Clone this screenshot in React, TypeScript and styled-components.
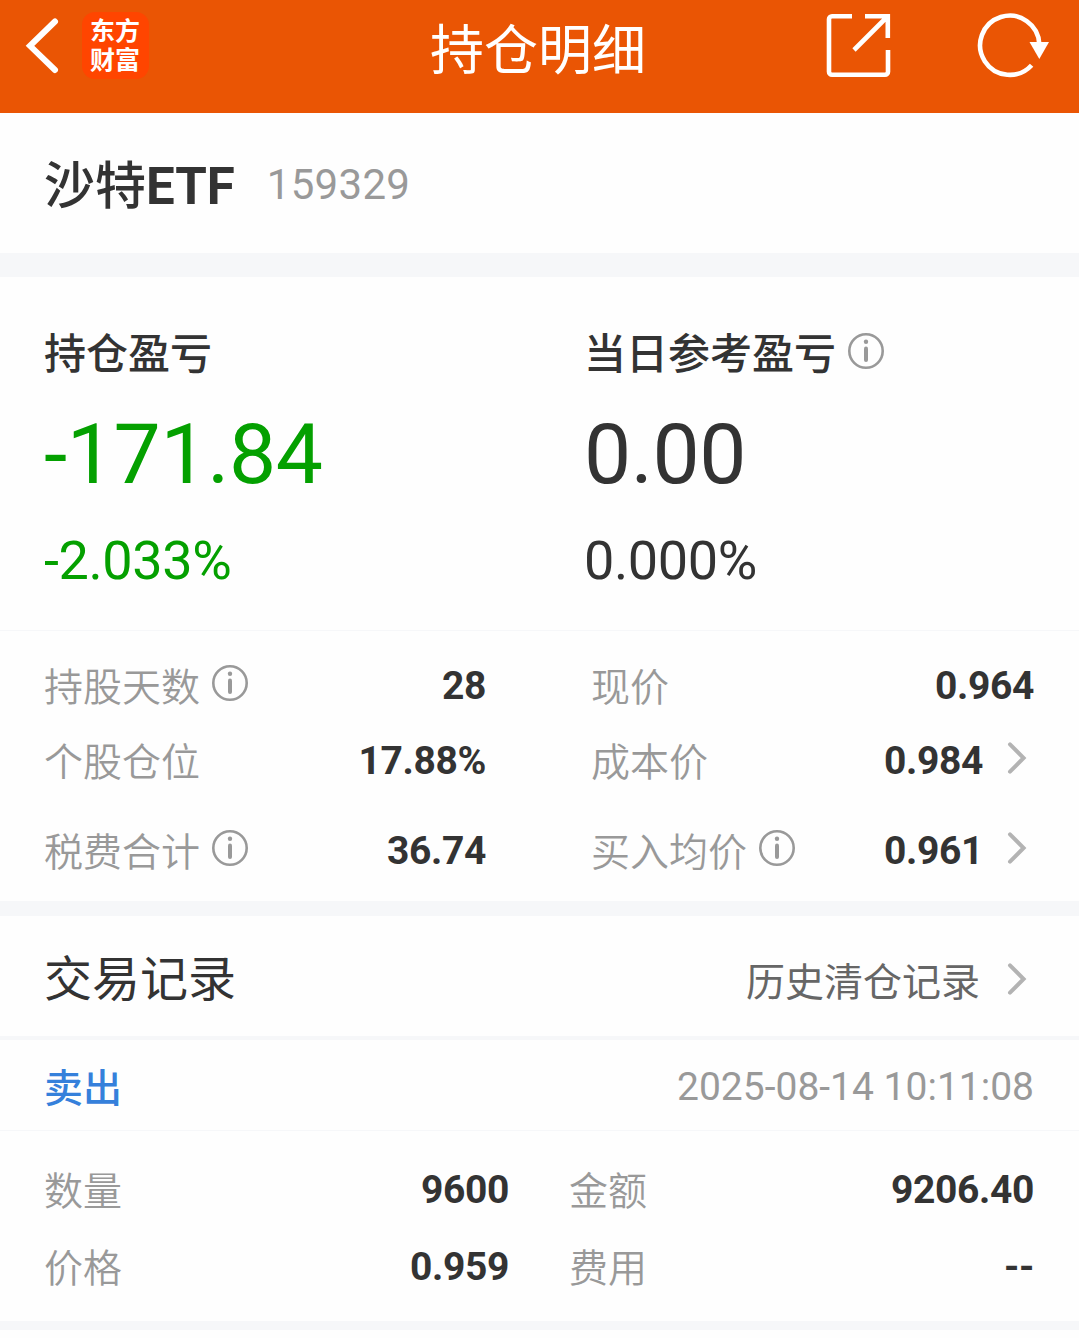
import React from "react";
import styled, { createGlobalStyle } from "styled-components";

const GlobalStyle = createGlobalStyle`
  * { box-sizing: border-box; }
  body {
    margin: 0;
    background: #fefefe;
    color: #333;
    font-family: Roboto, "Noto Sans CJK SC", sans-serif;
  }
`;

const Page = styled.main`
  display: flex;
  flex-direction: column;
  width: 1079px;
`;

const Header = styled.header`
  display: grid;
  grid-template-columns: 1fr auto 1fr;
  align-items: start;
  height: 113px;
  padding: 12px 28px 0 25px;
  background: #ea5504;
  color: #fff;
`;

const HeaderLeft = styled.div`
  display: flex;
  align-items: center;
  gap: 22px;
`;

const HeaderTitle = styled.h1`
  margin: 0;
  padding-top: 4px;
  font-size: 54px;
  font-weight: 400;
  line-height: 72px;
`;

const HeaderRight = styled.div`
  display: flex;
  justify-content: flex-end;
  gap: 86px;
`;

const Logo = styled.div`
  width: 67px;
  height: 67px;
  padding: 5px 0 0 8px;
  border-radius: 13px;
  background: #ff4500;
  font-size: 25px;
  font-weight: 700;
  line-height: 29px;
`;

const Band = styled.div<{ $height: number }>`
  height: ${(p) => p.$height}px;
  background: #f6f7f9;
`;

const StockBar = styled.section`
  display: flex;
  align-items: flex-start;
  gap: 32px;
  height: 140px;
  padding: 38px 44px 0;
`;

const StockName = styled.h2`
  margin: 0;
  font-size: 51px;
  font-weight: 500;
  line-height: 72px;

  b {
    font-weight: 700;
  }
`;

const StockCode = styled.span`
  color: #999;
  font-size: 42px;
  letter-spacing: 0.3px;
  line-height: 68px;
`;

const Profit = styled.section`
  display: grid;
  grid-template-columns: 540px 1fr;
  height: 353px;
  padding: 48px 45px 0 44px;
`;

const ProfitCol = styled.div<{ $tone?: string }>`
  display: flex;
  flex-direction: column;
  color: ${(p) => p.$tone ?? "#333"};
`;

const ProfitLabel = styled.div`
  display: flex;
  align-items: center;
  gap: 12px;
  height: 60px;
  color: #333;
  font-size: 42px;
  font-weight: 500;
  line-height: 60px;
`;

const ProfitAmount = styled.div`
  margin-top: 20px;
  font-size: 84px;
  letter-spacing: -0.4px;
  line-height: 100px;
`;

const ProfitRate = styled.div`
  margin-top: 23px;
  font-size: 54px;
  letter-spacing: -0.4px;
  line-height: 66px;
`;

const Details = styled.section`
  display: grid;
  grid-template-columns: 442px 443px;
  column-gap: 105px;
  grid-template-rows: 75px 75px 105px;
  height: 270px;
  padding: 17px 45px 0 44px;
`;

const Trade = styled.section`
  display: grid;
  grid-template-columns: 465px 465px;
  column-gap: 60px;
  grid-template-rows: 77px 77px;
  height: 190px;
  padding: 20px 45px 0 44px;
`;

const Cell = styled.div`
  display: flex;
  align-items: center;
`;

const Label = styled.span`
  padding-top: 4px;
  color: #999;
  font-size: 39px;
  font-weight: 350;
  line-height: 56px;
`;

const Value = styled.span`
  margin-left: auto;
  font-size: 39px;
  font-weight: 700;
  letter-spacing: -0.35px;
  line-height: 56px;
`;

const InfoSvg = styled.svg`
  flex: none;
  width: 36px;
  height: 36px;
  margin: 0 0 5px 12px;

  ${ProfitLabel} & {
    margin: 0 0 8px;
  }
`;

const ArrowSvg = styled.svg`
  flex: none;
  width: 20px;
  height: 34px;
  margin: 0 7px 5px 24px;
`;

const RecordHeader = styled.section`
  display: flex;
  align-items: center;
  justify-content: space-between;
  height: 120px;
  padding: 4px 45px 0 44px;
`;

const RecordTitle = styled.h2`
  margin: 0;
  padding-top: 4px;
  font-size: 48px;
  font-weight: 400;
  line-height: 70px;
`;

const HistoryLink = styled.div`
  display: flex;
  align-items: center;
  gap: 3px;
  padding-top: 6px;
  color: #666;
`;

const HistoryText = styled.span`
  padding-top: 4px;
  font-size: 39px;
  line-height: 56px;
`;

const SellRow = styled.section`
  display: flex;
  align-items: center;
  justify-content: space-between;
  height: 90px;
  padding: 4px 45px 0 44px;
  font-size: 39px;
  line-height: 56px;
`;

const Side = styled.span`
  padding-top: 4px;
  color: #3580db;
  font-weight: 500;
`;

const Time = styled.time`
  color: #999;
`;

const InfoIcon = () => (
  <InfoSvg viewBox="0 0 36 36" fill="none">
    <circle cx="18" cy="18" r="16.7" stroke="#999" strokeWidth="2.6" />
    <circle cx="18" cy="8.8" r="2.2" fill="#999" />
    <path d="M18 15.6V27" stroke="#999" strokeWidth="4" strokeLinecap="round" />
  </InfoSvg>
);

const Arrow = () => (
  <ArrowSvg viewBox="0 0 20 34" fill="none">
    <path d="M3 3.3L16.6 17L3 30.7" stroke="#b3b3b3" strokeWidth="4" strokeLinecap="round" />
  </ArrowSvg>
);

type Item = { label: string; value: string; info?: boolean; arrow?: boolean };

const DETAILS: Item[] = [
  { label: "持股天数", value: "28", info: true },
  { label: "现价", value: "0.964" },
  { label: "个股仓位", value: "17.88%" },
  { label: "成本价", value: "0.984", arrow: true },
  { label: "税费合计", value: "36.74", info: true },
  { label: "买入均价", value: "0.961", info: true, arrow: true },
];

const TRADE: Item[] = [
  { label: "数量", value: "9600" },
  { label: "金额", value: "9206.40" },
  { label: "价格", value: "0.959" },
  { label: "费用", value: "--" },
];

const ItemCell = ({ label, value, info, arrow }: Item) => (
  <Cell>
    <Label>{label}</Label>
    {info && <InfoIcon />}
    <Value>{value}</Value>
    {arrow && <Arrow />}
  </Cell>
);

export default function App() {
  return (
    <Page>
      <GlobalStyle />
      <Header>
        <HeaderLeft>
          <svg width="35" height="60" viewBox="0 0 35 60" fill="none">
            <path d="M30 5.5L5 29.8L30 54" stroke="#fff" strokeWidth="6" strokeLinecap="round" />
          </svg>
          <Logo>
            东方
            <br />
            财富
          </Logo>
        </HeaderLeft>
        <HeaderTitle>持仓明细</HeaderTitle>
        <HeaderRight>
          <svg width="67" height="67" viewBox="0 0 67 67" fill="none" stroke="#fff" strokeWidth="4.6">
            <path d="M28 4.3H8A3 3 0 0 0 5 7.3V59.7A3 3 0 0 0 8 62.7H61A3 3 0 0 0 64 59.7V38" />
            <path d="M41 4.3H63.8V26M62.5 5.5L30 38" />
          </svg>
          <svg width="74" height="67" viewBox="0 0 74 67" fill="none">
            <path d="M62.3 32A29.6 29.6 0 1 0 54.6 53.2" stroke="#fff" strokeWidth="4.6" />
            <path d="M52.5 30H72L62.3 47Z" fill="#fff" />
          </svg>
        </HeaderRight>
      </Header>

      <StockBar>
        <StockName>
          沙特<b>ETF</b>
        </StockName>
        <StockCode>159329</StockCode>
      </StockBar>
      <Band $height={24} />

      <Profit>
        <ProfitCol $tone="#04a000">
          <ProfitLabel>持仓盈亏</ProfitLabel>
          <ProfitAmount>-171.84</ProfitAmount>
          <ProfitRate>-2.033%</ProfitRate>
        </ProfitCol>
        <ProfitCol>
          <ProfitLabel>
            当日参考盈亏
            <InfoIcon />
          </ProfitLabel>
          <ProfitAmount>0.00</ProfitAmount>
          <ProfitRate>0.000%</ProfitRate>
        </ProfitCol>
      </Profit>
      <Band $height={1} />

      <Details>
        {DETAILS.map((d) => (
          <ItemCell key={d.label} {...d} />
        ))}
      </Details>
      <Band $height={15} />

      <RecordHeader>
        <RecordTitle>交易记录</RecordTitle>
        <HistoryLink>
          <HistoryText>历史清仓记录</HistoryText>
          <Arrow />
        </HistoryLink>
      </RecordHeader>
      <Band $height={4} />

      <SellRow>
        <Side>卖出</Side>
        <Time>2025-08-14 10:11:08</Time>
      </SellRow>
      <Band $height={1} />

      <Trade>
        {TRADE.map((d) => (
          <ItemCell key={d.label} {...d} />
        ))}
      </Trade>
      <Band $height={9} />
    </Page>
  );
}
